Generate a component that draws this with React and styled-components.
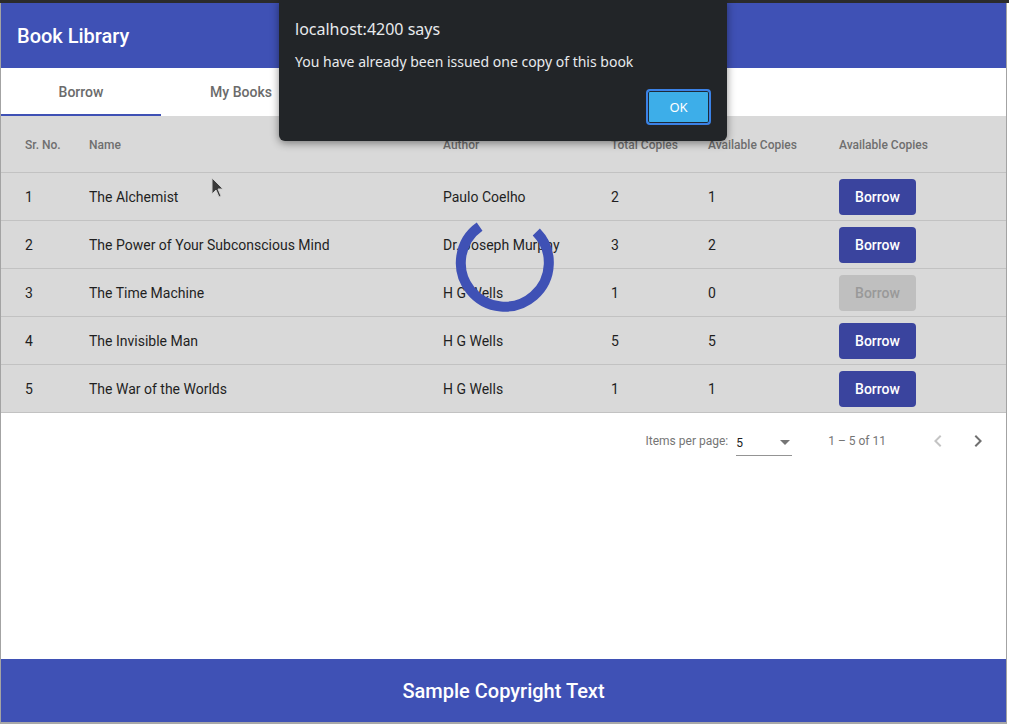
import { createGlobalStyle, styled } from "styled-components"

const GlobalStyle = createGlobalStyle`
    html, body {
        margin: 0;
        padding: 0;
        background: #ffffff;
        font-family: Roboto, "Noto Sans", Arial, sans-serif;
    }
    * { box-sizing: border-box; }
`

const books = [
    { id: 1, name: "The Alchemist", author: "Paulo Coelho", total: 2, available: 1 },
    { id: 2, name: "The Power of Your Subconscious Mind", author: "Dr. Joseph Murphy", total: 3, available: 2 },
    { id: 3, name: "The Time Machine", author: "H G Wells", total: 1, available: 0 },
    { id: 4, name: "The Invisible Man", author: "H G Wells", total: 5, available: 5 },
    { id: 5, name: "The War of the Worlds", author: "H G Wells", total: 1, available: 1 },
]

const Screen = styled.div`
    position: relative;
    width: 1009px;
    height: 724px;
    overflow: hidden;
    background: #ffffff;
`
const TopStrip = styled.div`
    height: 3px;
    background: #2b2b2b;
`
const Window = styled.div`
    width: 1007px;
    height: 721px;
    border-left: 1px solid #a3a3a3;
    border-right: 1px solid #a3a3a3;
    border-bottom: 2px solid #a8a8a8;
    display: flex;
    flex-direction: column;
    background: #ffffff;
`
const Toolbar = styled.header`
    height: 65px;
    flex-shrink: 0;
    background: #3f51b5;
    color: #ffffff;
    display: flex;
    align-items: center;
    padding: 0 16px;
    font-size: 20px;
    font-weight: 500;
`
const TabBar = styled.nav`
    height: 48px;
    flex-shrink: 0;
    display: flex;
    background: #ffffff;
`
const Tab = styled.div`
    width: 160px;
    display: flex;
    align-items: center;
    justify-content: center;
    padding-top: 1px;
    font-size: 14px;
    font-weight: 500;
    color: #6b6b6b;
    border-bottom: 2px solid ${p => (p.$active ? "#3f51b5" : "transparent")};
`
const Main = styled.main`
    flex: 1;
`
const Table = styled.div`
    background: #d9d9d9;
    padding-top: 1px;
`
const Row = styled.div`
    display: grid;
    grid-template-columns: 64px 354px 168px 97px 131px 1fr;
    align-items: center;
    height: ${p => (p.$head ? "56px" : "48px")};
    padding-left: 24px;
    border-bottom: 1px solid #c2c2c2;
    font-size: ${p => (p.$head ? "12px" : "14px")};
    font-weight: ${p => (p.$head ? 500 : 400)};
    color: ${p => (p.$head ? "#6f6f6f" : "#1f1f1f")};
`
const BorrowButton = styled.button`
    width: 77px;
    height: 36px;
    border: none;
    border-radius: 4px;
    font-family: Roboto, sans-serif;
    font-size: 14px;
    font-weight: 500;
    background: ${p => (p.disabled ? "#bfbfbf" : "#3a449e")};
    color: ${p => (p.disabled ? "#999999" : "#ffffff")};
`
const Paginator = styled.div`
    height: 56px;
    display: flex;
    align-items: center;
    justify-content: flex-end;
    padding-right: 8px;
    font-size: 12px;
    color: #757575;
`
const PageLabel = styled.span`
    margin-right: 8px;
`
const PageSelect = styled.div`
    width: 56px;
    height: 26px;
    margin-top: 4px;
    display: flex;
    align-items: center;
    justify-content: space-between;
    border-bottom: 1px solid #949494;
    color: #202020;
    padding-right: 2px;
`
const Caret = styled.span`
    width: 0;
    height: 0;
    border-left: 5px solid transparent;
    border-right: 5px solid transparent;
    border-top: 5px solid #757575;
`
const RangeLabel = styled.span`
    margin: 0 32px 0 36px;
`
const PageButton = styled.div`
    width: 40px;
    height: 40px;
    display: flex;
    align-items: center;
    justify-content: center;
    color: ${p => (p.$disabled ? "#c4c4c4" : "#707070")};
`
const Footer = styled.footer`
    height: 63px;
    flex-shrink: 0;
    background: #3f51b5;
    color: #ffffff;
    display: flex;
    align-items: center;
    justify-content: center;
    font-size: 20px;
    font-weight: 500;
`
const Spinner = styled.svg`
    position: absolute;
    left: 454px;
    top: 214px;
`
const Cursor = styled.svg`
    position: absolute;
    left: 211px;
    top: 177px;
`
const Alert = styled.div`
    position: absolute;
    left: 279px;
    top: 0;
    width: 448px;
    height: 141px;
    background: #222528;
    border-radius: 0 0 6px 6px;
    box-shadow: 0 2px 8px rgba(0, 0, 0, 0.45);
    padding: 18px 16px 0 16px;
    font-family: "Noto Sans", "Open Sans", sans-serif;
    color: #e8eaed;
    display: flex;
    flex-direction: column;
`
const AlertTitle = styled.div`
    font-size: 16px;
    line-height: 22px;
`
const AlertText = styled.div`
    font-size: 14px;
    line-height: 20px;
    margin-top: 12px;
`
const AlertActions = styled.div`
    display: flex;
    justify-content: flex-end;
    margin-top: 17px;
`
const OkButton = styled.button`
    width: 65px;
    height: 36px;
    border-radius: 4px;
    border: 2px solid #3b82e6;
    box-shadow: inset 0 0 0 1px #1d2a3a;
    background: #3daee9;
    color: #ffffff;
    font-family: "Noto Sans", sans-serif;
    font-size: 13px;
`

const ChevronLeft = () => (
    <svg width="24" height="24" viewBox="0 0 24 24" fill="currentColor">
        <path d="M15.41 7.41L14 6l-6 6 6 6 1.41-1.41L10.83 12z" />
    </svg>
)
const ChevronRight = () => (
    <svg width="24" height="24" viewBox="0 0 24 24" fill="currentColor">
        <path d="M10 6L8.59 7.41 13.17 12l-4.58 4.59L10 18l6-6z" />
    </svg>
)

const App = () => {
    return (
        <Screen>
            <GlobalStyle />
            <TopStrip />
            <Window>
                <Toolbar>Book Library</Toolbar>
                <TabBar>
                    <Tab $active>Borrow</Tab>
                    <Tab>My Books</Tab>
                </TabBar>
                <Main>
                    <Table>
                        <Row $head>
                            <span>Sr. No.</span>
                            <span>Name</span>
                            <span>Author</span>
                            <span>Total Copies</span>
                            <span>Available Copies</span>
                            <span>Available Copies</span>
                        </Row>
                        {books.map(b => (
                            <Row key={b.id}>
                                <span>{b.id}</span>
                                <span>{b.name}</span>
                                <span>{b.author}</span>
                                <span>{b.total}</span>
                                <span>{b.available}</span>
                                <span>
                                    <BorrowButton disabled={b.available === 0}>Borrow</BorrowButton>
                                </span>
                            </Row>
                        ))}
                    </Table>
                    <Paginator>
                        <PageLabel>Items per page:</PageLabel>
                        <PageSelect>
                            <span>5</span>
                            <Caret />
                        </PageSelect>
                        <RangeLabel>1 – 5 of 11</RangeLabel>
                        <PageButton $disabled><ChevronLeft /></PageButton>
                        <PageButton><ChevronRight /></PageButton>
                    </Paginator>
                </Main>
                <Footer>Sample Copyright Text</Footer>
            </Window>

            <Spinner width="100" height="100" viewBox="0 0 100 100">
                <path
                    d="M 25.6 12.6 A 44 44 0 1 0 82.3 17.9"
                    fill="none"
                    stroke="#3f51b5"
                    strokeWidth="10"
                />
            </Spinner>

            <Cursor width="14" height="22" viewBox="0 0 14 22">
                <path d="M1 1 L1 17 L5 13 L8 20 L10 19 L7 12 L12 12 Z" fill="#3a3a3a" stroke="#cfcfcf" strokeWidth="1" />
            </Cursor>

            <Alert>
                <AlertTitle>localhost:4200 says</AlertTitle>
                <AlertText>You have already been issued one copy of this book</AlertText>
                <AlertActions>
                    <OkButton>OK</OkButton>
                </AlertActions>
            </Alert>
        </Screen>
    )
}

export default App
